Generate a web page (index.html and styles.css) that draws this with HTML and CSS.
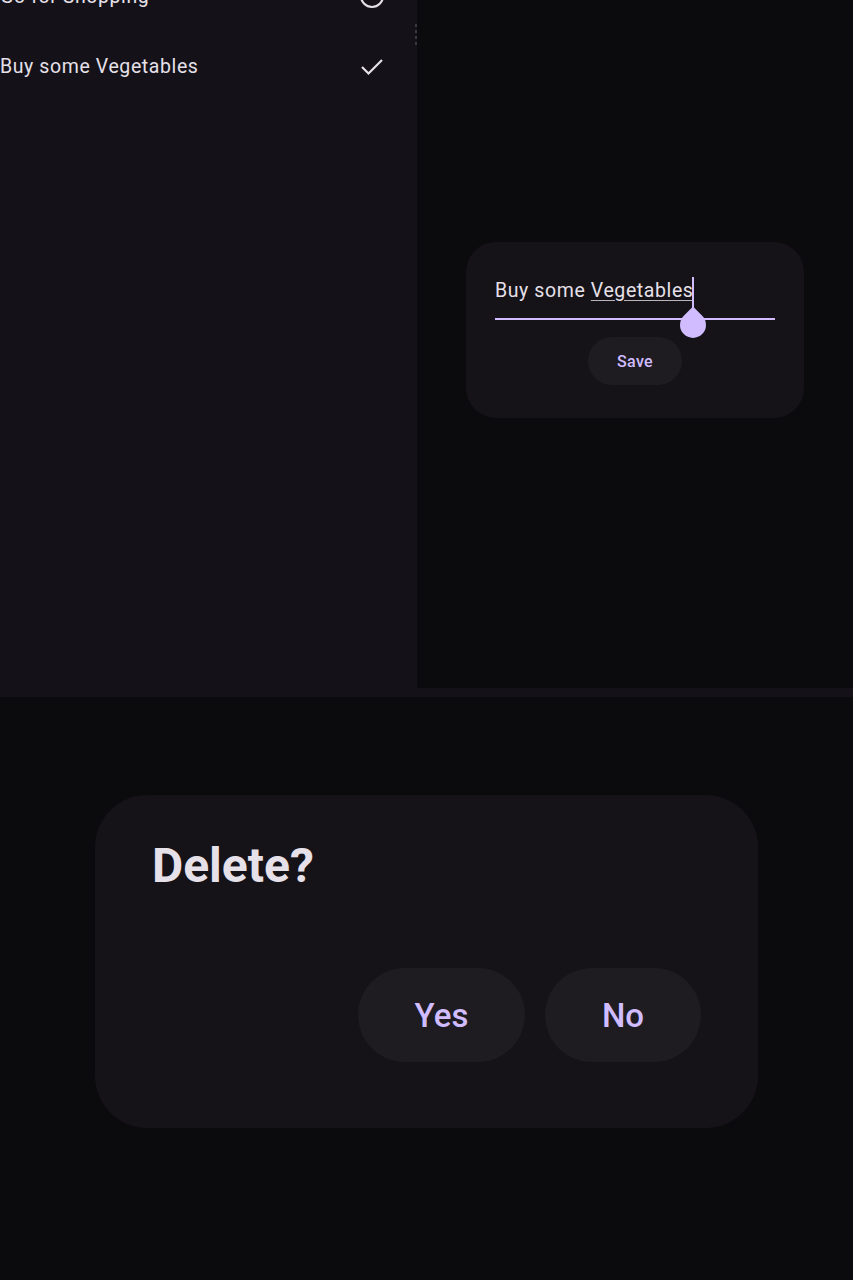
FILE: index.html
```html
<!DOCTYPE html>
<html>
<head>
<meta charset="utf-8">
<link rel="stylesheet" href="styles.css">
</head>
<body>
<div class="top">
  <div class="list-panel">
    <div class="list">
      <div class="row first">
        <span class="label">Go for Shopping</span>
        <svg class="icon" width="28" height="28" viewBox="0 0 28 28"><circle cx="14" cy="14" r="11" fill="none" stroke="#e6e0e9" stroke-width="2.2"/></svg>
      </div>
      <div class="row">
        <span class="label">Buy some Vegetables</span>
        <svg class="icon" width="28" height="28" viewBox="0 0 28 28"><path d="M4 15 L10.5 21.5 L24 8" fill="none" stroke="#e6e0e9" stroke-width="2.2"/></svg>
      </div>
    </div>
    <div class="scroll-mark"></div>
  </div>
  <div class="right-col">
    <div class="right-area">
      <div class="edit-dialog">
        <div class="field">
          <span class="field-text">Buy some <span class="composing">Vegetables</span></span>
          <div class="field-line"></div>
          <svg class="caret" width="30" height="64" viewBox="0 0 30 64">
            <rect x="14" y="0" width="2" height="42" fill="#d0bcff"/>
            <path d="M15 29.5 L24.2 38.7 A13 13 0 1 1 5.8 38.7 Z" fill="#d0bcff"/>
          </svg>
        </div>
        <div class="save-row"><button class="save">Save</button></div>
      </div>
    </div>
  </div>
</div>
<div class="bottom">
  <div class="confirm">
    <h1 class="confirm-title">Delete?</h1>
    <div class="actions">
      <button class="big-btn yes">Yes</button>
      <button class="big-btn no">No</button>
    </div>
  </div>
</div>
</body>
</html>
```

FILE: styles.css
```css
* { box-sizing: border-box; }
html, body { margin: 0; padding: 0; }
body {
  width: 853px;
  height: 1280px;
  overflow: hidden;
  background: #0b0a0d;
  font-family: Roboto, "Noto Sans", sans-serif;
  color: #e6e0e9;
}
.top {
  display: flex;
  height: 697px;
}
.list-panel {
  position: relative;
  width: 417px;
  height: 697px;
  background: #141218;
  overflow: hidden;
}
.list {
  display: flex;
  flex-direction: column;
}
.row {
  height: 70px;
  display: flex;
  align-items: center;
  justify-content: space-between;
  padding-right: 31px;
}
.row.first { margin-top: -39px; }
.label {
  font-size: 19.5px;
  letter-spacing: 0.6px;
  color: #e6e0e9;
}
.icon { display: block; }
.scroll-mark {
  position: absolute;
  right: 0;
  top: 24px;
  width: 2px;
  height: 22px;
  background: repeating-linear-gradient(to bottom, #3a3840 0 3px, transparent 3px 6px);
}
.right-col {
  flex: 1;
  background: #141218;
  display: flex;
  flex-direction: column;
}
.right-area {
  height: 688px;
  background: #0b0a0d;
  display: flex;
  justify-content: center;
  align-items: flex-start;
  padding-top: 242px;
}
.edit-dialog {
  width: 338px;
  height: 176px;
  background: #151218;
  border-radius: 30px;
  padding: 35px 29px 0 29px;
  display: flex;
  flex-direction: column;
}
.field {
  position: relative;
  height: 43px;
  display: flex;
  flex-direction: column;
  justify-content: flex-end;
}
.field-text {
  font-size: 19.5px;
  letter-spacing: 0.6px;
  color: #e6e0e9;
  line-height: 22px;
  margin-bottom: 16px;
}
.composing {
  text-decoration: underline;
  text-decoration-color: #b8b3bc;
  text-underline-offset: 3px;
}
.field-line {
  height: 2px;
  background: #d0bcff;
}
.caret {
  position: absolute;
  left: 183px;
  top: 0;
}
.save-row {
  display: flex;
  justify-content: center;
  margin-top: 17px;
}
.save {
  width: 94px;
  height: 48px;
  border: none;
  border-radius: 24px;
  background: #1e1c21;
  color: #d0bcff;
  font-family: Roboto, sans-serif;
  font-size: 16px;
  font-weight: 500;
  letter-spacing: 0.3px;
}
.bottom {
  height: 583px;
  display: flex;
  justify-content: center;
  align-items: flex-start;
  padding-top: 98px;
}
.confirm {
  width: 663px;
  height: 333px;
  background: #151218;
  border-radius: 52px;
  padding: 46px 57px 66px 57px;
  display: flex;
  flex-direction: column;
  justify-content: space-between;
}
.confirm-title {
  margin: 0;
  font-size: 48px;
  font-weight: 700;
  line-height: 50px;
  color: #e6e0e9;
  letter-spacing: 0;
}
.actions {
  display: flex;
  justify-content: flex-end;
  gap: 20px;
}
.big-btn {
  height: 94px;
  border: none;
  border-radius: 47px;
  background: #1e1c21;
  color: #d0bcff;
  font-family: Roboto, sans-serif;
  font-size: 33px;
  font-weight: 500;
}
.yes { width: 167px; }
.no { width: 156px; }
```
